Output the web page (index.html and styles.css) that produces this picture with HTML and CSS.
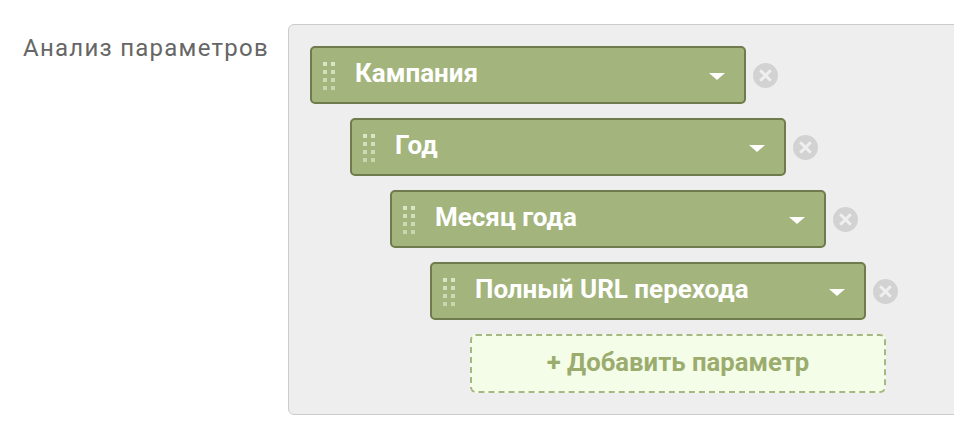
FILE: index.html
```html
<!DOCTYPE html>
<html lang="ru">
<head>
    <meta charset="UTF-8">
    <title>Анализ параметров</title>
    <link rel="stylesheet" href="styles.css">
</head>
<body>
    <div class="row">
        <div class="label">Анализ параметров</div>

        <div class="panel">
            <div class="dim-row" style="margin-left: 0px">
                <div class="chip">
                    <span class="grip"></span>
                    <span class="chip-name">Кампания</span>
                    <span class="caret"></span>
                </div>
                <span class="remove"></span>
            </div>
            <div class="dim-row" style="margin-left: 40px">
                <div class="chip">
                    <span class="grip"></span>
                    <span class="chip-name">Год</span>
                    <span class="caret"></span>
                </div>
                <span class="remove"></span>
            </div>
            <div class="dim-row" style="margin-left: 80px">
                <div class="chip">
                    <span class="grip"></span>
                    <span class="chip-name">Месяц года</span>
                    <span class="caret"></span>
                </div>
                <span class="remove"></span>
            </div>
            <div class="dim-row" style="margin-left: 120px">
                <div class="chip">
                    <span class="grip"></span>
                    <span class="chip-name">Полный URL перехода</span>
                    <span class="caret"></span>
                </div>
                <span class="remove"></span>
            </div>

            <button class="add-btn">+ Добавить параметр</button>
        </div>
    </div>
</body>
</html>
```

FILE: styles.css
```css
* {
    margin: 0;
    padding: 0;
    box-sizing: border-box;
}

body {
    font-family: Roboto, "Liberation Sans", Arial, sans-serif;
    background: #fff;
    overflow: hidden;
    padding-top: 24px;
}

.row {
    display: flex;
    align-items: flex-start;
}

.label {
    flex: 0 0 288px;
    padding: 10px 0 0 23px;
    font-size: 24px;
    letter-spacing: 1.25px;
    color: #666;
}

.panel {
    flex: 0 0 700px;
    height: 391px;
    background: #eee;
    border: 1px solid #ccc;
    border-radius: 6px;
    padding: 21px 0 0 21px;
    display: flex;
    flex-direction: column;
    gap: 14px;
}

.dim-row {
    display: flex;
    align-items: center;
}

.chip {
    width: 436px;
    height: 58px;
    background: #a3b47c;
    border: 2px solid #6f7b4c;
    border-radius: 5px;
    display: flex;
    align-items: center;
    padding: 0 19px 0 11px;
}

/* 2 x 4 dots drawn with shadows of one square */
.grip {
    position: relative;
    width: 12px;
    height: 28px;
    margin-top: 2px;
}

.grip::before {
    content: "";
    position: absolute;
    left: 0;
    top: 0;
    width: 4px;
    height: 4px;
    background: #dce4c7;
    box-shadow:
        8px 0 #dce4c7,
        0 8px #d6dfbd, 8px 8px #d6dfbd,
        0 16px #d0d9b5, 8px 16px #d0d9b5,
        0 24px #cad4ad, 8px 24px #cad4ad;
}

.chip-name {
    flex: 1;
    margin-left: 20px;
    padding-bottom: 4px;
    color: #fff;
    font-weight: 700;
    font-size: 26px;
}

.caret {
    width: 0;
    height: 0;
    border-left: 8.5px solid transparent;
    border-right: 8.5px solid transparent;
    border-top: 7px solid #fff;
    margin-top: 2px;
}

.remove {
    position: relative;
    width: 25px;
    height: 25px;
    margin-left: 7px;
    border-radius: 50%;
    background: #d2d2d2;
}

.remove::before,
.remove::after {
    content: "";
    position: absolute;
    left: 5px;
    top: 11px;
    width: 15px;
    height: 3px;
    background: #efefef;
    transform: rotate(45deg);
}

.remove::after {
    transform: rotate(-45deg);
}

.add-btn {
    margin-left: 160px;
    width: 416px;
    height: 59px;
    padding-bottom: 3px;
    background: #f3fde8;
    border: 2px dashed #a7b783;
    border-radius: 6px;
    color: #9cac6f;
    font-family: inherit;
    font-weight: 700;
    font-size: 25.7px;
    cursor: pointer;
}
```
